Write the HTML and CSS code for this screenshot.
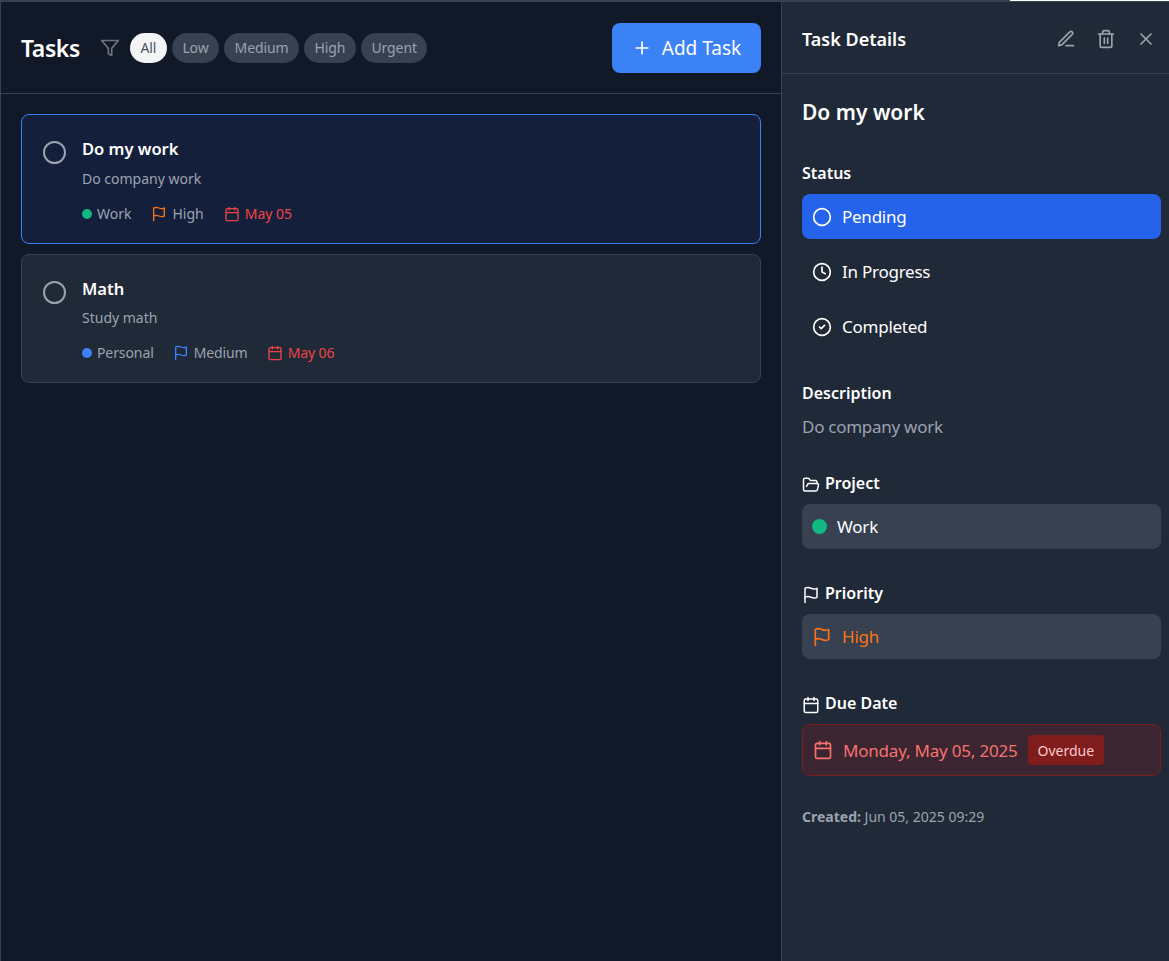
FILE: index.html
```html
<!DOCTYPE html>
<html>

<head>
    <meta charset="UTF-8">
    <title>Tasks</title>
    <link rel="stylesheet" href="styles.css">
</head>

<body>
    <div class="top-line"><span class="top-white"></span></div>
    <div class="app">
        <!-- Task list -->
        <main class="main">
            <header class="main-header">
                <div class="header-left">
                    <h1>Tasks</h1>
                    <svg class="filter-icon" width="20" height="20" viewBox="0 0 24 24"><polygon points="22 3 2 3 10 12.46 10 19 14 21 14 12.46 22 3"/></svg>
                    <div class="chips">
                        <span class="chip chip-active">All</span>
                        <span class="chip">Low</span>
                        <span class="chip">Medium</span>
                        <span class="chip">High</span>
                        <span class="chip">Urgent</span>
                    </div>
                </div>
                <button class="add-btn">
                    <svg width="20" height="20" viewBox="0 0 24 24"><path d="M5 12h14"/><path d="M12 5v14"/></svg>
                    Add Task
                </button>
            </header>

            <div class="task-list">
                <div class="task task-selected">
                    <span class="task-check"></span>
                    <div class="task-body">
                        <h3>Do my work</h3>
                        <p>Do company work</p>
                        <div class="task-meta">
                            <span class="meta"><i class="dot dot-green"></i>Work</span>
                            <span class="meta"><svg class="ic-orange" width="16" height="16" viewBox="0 0 24 24"><path d="M4 15s1-1 4-1 5 2 8 2 4-1 4-1V3s-1 1-4 1-5-2-8-2-4 1-4 1z"/><line x1="4" y1="22" x2="4" y2="15"/></svg>High</span>
                            <span class="meta meta-red"><svg width="16" height="16" viewBox="0 0 24 24"><rect x="3" y="4" width="18" height="18" rx="2"/><path d="M16 2v4M8 2v4M3 10h18"/></svg>May 05</span>
                        </div>
                    </div>
                </div>

                <div class="task">
                    <span class="task-check"></span>
                    <div class="task-body">
                        <h3>Math</h3>
                        <p>Study math</p>
                        <div class="task-meta">
                            <span class="meta"><i class="dot dot-blue"></i>Personal</span>
                            <span class="meta"><svg class="ic-blue" width="16" height="16" viewBox="0 0 24 24"><path d="M4 15s1-1 4-1 5 2 8 2 4-1 4-1V3s-1 1-4 1-5-2-8-2-4 1-4 1z"/><line x1="4" y1="22" x2="4" y2="15"/></svg>Medium</span>
                            <span class="meta meta-red"><svg width="16" height="16" viewBox="0 0 24 24"><rect x="3" y="4" width="18" height="18" rx="2"/><path d="M16 2v4M8 2v4M3 10h18"/></svg>May 06</span>
                        </div>
                    </div>
                </div>
            </div>
        </main>

        <!-- Task details -->
        <aside class="details">
            <header class="details-header">
                <h2>Task Details</h2>
                <div class="details-actions">
                    <svg width="20" height="20" viewBox="0 0 24 24"><path d="M12 20h9"/><path d="M16.5 3.5a2.12 2.12 0 0 1 3 3L7 19l-4 1 1-4z"/></svg>
                    <svg width="20" height="20" viewBox="0 0 24 24"><path d="M3 6h18"/><path d="M19 6v14a2 2 0 0 1-2 2H7a2 2 0 0 1-2-2V6"/><path d="M8 6V4a2 2 0 0 1 2-2h4a2 2 0 0 1 2 2v2"/><path d="M10 11v6M14 11v6"/></svg>
                    <svg width="20" height="20" viewBox="0 0 24 24"><path d="M18 6 6 18"/><path d="m6 6 12 12"/></svg>
                </div>
            </header>

            <div class="details-body">
                <h2 class="details-title">Do my work</h2>

                <section class="block block-status">
                    <h4>Status</h4>
                    <div class="status-list">
                        <div class="status status-active">
                            <svg width="20" height="20" viewBox="0 0 24 24"><circle cx="12" cy="12" r="10"/></svg>
                            Pending
                        </div>
                        <div class="status">
                            <svg width="20" height="20" viewBox="0 0 24 24"><circle cx="12" cy="12" r="10"/><polyline points="12 6 12 12 16 14"/></svg>
                            In Progress
                        </div>
                        <div class="status">
                            <svg width="20" height="20" viewBox="0 0 24 24"><circle cx="12" cy="12" r="10"/><path d="m9 12 2 2 4-4"/></svg>
                            Completed
                        </div>
                    </div>
                </section>

                <section class="block block-desc">
                    <h4>Description</h4>
                    <p class="desc">Do company work</p>
                </section>

                <section class="block">
                    <h4><svg width="18" height="18" viewBox="0 0 24 24"><path d="m6 14 1.5-2.9A2 2 0 0 1 9.24 10H20a2 2 0 0 1 1.94 2.5l-1.54 6a2 2 0 0 1-1.95 1.5H4a2 2 0 0 1-2-2V5a2 2 0 0 1 2-2h3.9a2 2 0 0 1 1.69.9l.81 1.2a2 2 0 0 0 1.67.9H18a2 2 0 0 1 2 2v2"/></svg>Project</h4>
                    <div class="field"><i class="dot dot-green dot-large"></i>Work</div>
                </section>

                <section class="block">
                    <h4><svg width="18" height="18" viewBox="0 0 24 24"><path d="M4 15s1-1 4-1 5 2 8 2 4-1 4-1V3s-1 1-4 1-5-2-8-2-4 1-4 1z"/><line x1="4" y1="22" x2="4" y2="15"/></svg>Priority</h4>
                    <div class="field field-high"><svg class="ic-orange" width="20" height="20" viewBox="0 0 24 24"><path d="M4 15s1-1 4-1 5 2 8 2 4-1 4-1V3s-1 1-4 1-5-2-8-2-4 1-4 1z"/><line x1="4" y1="22" x2="4" y2="15"/></svg>High</div>
                </section>

                <section class="block">
                    <h4><svg width="18" height="18" viewBox="0 0 24 24"><rect x="3" y="4" width="18" height="18" rx="2"/><path d="M16 2v4M8 2v4M3 10h18"/></svg>Due Date</h4>
                    <div class="field field-overdue">
                        <svg width="20" height="20" viewBox="0 0 24 24"><rect x="3" y="4" width="18" height="18" rx="2"/><path d="M16 2v4M8 2v4M3 10h18"/></svg>
                        Monday, May 05, 2025
                        <span class="overdue">Overdue</span>
                    </div>
                </section>

                <p class="created"><b>Created:</b> Jun 05, 2025 09:29</p>
            </div>
        </aside>
    </div>
</body>

</html>
```

FILE: styles.css
```css
* {
    box-sizing: border-box;
}

html,
body {
    margin: 0;
    padding: 0;
    height: 100%;
    overflow: hidden;
}

body {
    font-family: "Noto Sans", "Liberation Sans", sans-serif;
    background-color: #111827;
    color: #fff;
    display: flex;
    flex-direction: column;
}

svg {
    fill: none;
    stroke: currentColor;
    stroke-width: 2;
    stroke-linecap: round;
    stroke-linejoin: round;
    flex-shrink: 0;
}

h1,
h2,
h3,
h4,
p {
    margin: 0;
}

.top-line {
    height: 2px;
    background-color: #374151;
    display: flex;
    justify-content: flex-end;
    align-items: flex-start;
}

.top-white {
    width: 159px;
    height: 1px;
    background-color: #fff;
}

.app {
    flex: 1;
    display: flex;
    min-height: 0;
    border-left: 1px solid #374151;
}

/* Task list */
.main {
    width: 781px;
    border-right: 1px solid #374151;
}

.main-header {
    height: 92px;
    padding: 0 20px;
    display: flex;
    align-items: center;
    justify-content: space-between;
    border-bottom: 1px solid #374151;
}

.header-left {
    display: flex;
    align-items: center;
}

h1 {
    width: 59px;
    font-size: 23px;
    font-weight: 600;
    letter-spacing: -0.4px;
    white-space: nowrap;
    margin-right: 20px;
}

.filter-icon {
    color: #6b7280;
    margin-right: 10px;
}

.chips {
    display: flex;
    gap: 5px;
}

.chip {
    height: 30px;
    padding: 0 10.5px;
    display: flex;
    align-items: center;
    border-radius: 15px;
    font-size: 14px;
    letter-spacing: -0.1px;
    background-color: #374151;
    color: #9ca3af;
}

.chip-active {
    background-color: #f3f4f6;
    color: #4b5563;
}

.add-btn {
    width: 149px;
    height: 50px;
    border: none;
    border-radius: 8px;
    background-color: #3b82f6;
    color: #fff;
    font-family: inherit;
    font-size: 19px;
    display: flex;
    align-items: center;
    justify-content: center;
    gap: 10px;
}

.task-list {
    padding: 20px;
    display: flex;
    flex-direction: column;
    gap: 10px;
}

.task {
    height: 129px;
    padding: 21px;
    display: flex;
    gap: 16px;
    background-color: #1f2937;
    border: 1px solid #374151;
    border-radius: 8px;
}

.task-selected {
    height: 130px;
    background-color: #141f3b;
    border-color: #3b82f6;
}

.task-check {
    width: 23px;
    height: 23px;
    margin-top: 5px;
    border: 2px solid #9ca3af;
    border-radius: 50%;
    flex-shrink: 0;
}

.task-body h3 {
    font-size: 16.5px;
    font-weight: 600;
    line-height: 26px;
}

.task-body p {
    margin-top: 4px;
    font-size: 14px;
    line-height: 24px;
    color: #9ca3af;
}

.task-selected .task-body p {
    margin-top: 5px;
}

.task-meta {
    margin-top: 13px;
    display: flex;
    gap: 19px;
    font-size: 14px;
    letter-spacing: -0.1px;
    color: #9ca3af;
}

.task-selected .task-meta {
    gap: 20px;
    letter-spacing: 0;
}

.meta {
    display: flex;
    align-items: center;
    gap: 5px;
    line-height: 20px;
}

.meta-red {
    color: #ef4444;
}

.dot {
    width: 10px;
    height: 10px;
    border-radius: 50%;
    display: block;
}

.dot-green {
    background-color: #10b981;
}

.dot-blue {
    background-color: #3b82f6;
}

.dot-large {
    width: 15px;
    height: 15px;
}

.ic-orange {
    color: #f97316;
}

.ic-blue {
    color: #3b82f6;
}

/* Task details */
.details {
    flex: 1;
    background-color: #1f2937;
}

.details-header {
    height: 72px;
    padding: 2px 13px 0 20px;
    display: flex;
    align-items: center;
    justify-content: space-between;
    border-bottom: 1px solid #374151;
}

.details-header h2 {
    font-size: 18px;
    font-weight: 600;
}

.details-actions {
    display: flex;
    gap: 20px;
    color: #9ca3af;
}

.details-body {
    padding: 19px 8px 0 20px;
}

.details-title {
    font-size: 21px;
    font-weight: 600;
    line-height: 38px;
}

.block {
    margin-top: 34px;
}

.block h4 {
    height: 20px;
    font-size: 16px;
    font-weight: 600;
    line-height: 20px;
    margin-bottom: 11px;
    display: flex;
    align-items: center;
    gap: 5px;
}

.block h4 svg {
    margin-top: 3px;
}

.block-status {
    margin-top: 32px;
}

.status-list {
    display: flex;
    flex-direction: column;
    gap: 10px;
}

.status {
    height: 45px;
    padding: 0 10px;
    display: flex;
    align-items: center;
    gap: 10px;
    border-radius: 8px;
    font-size: 17px;
    letter-spacing: -0.25px;
}

.status-active {
    background-color: #2563eb;
}

.block-desc {
    margin-top: 34px;
}

.block-desc h4 {
    margin-bottom: 12px;
}

.desc {
    font-size: 17px;
    letter-spacing: -0.27px;
    color: #9ca3af;
    line-height: 24px;
}

.field {
    height: 45px;
    padding: 0 10px;
    display: flex;
    align-items: center;
    gap: 10px;
    border-radius: 8px;
    font-size: 17px;
    letter-spacing: -0.2px;
    background-color: #374151;
}

.field-high {
    color: #f97316;
}

.field-overdue {
    height: 52px;
    background-color: #3a2530;
    border: 1px solid #7f1d1d;
    color: #f87171;
}

.overdue {
    padding: 0 10px;
    height: 30px;
    display: flex;
    align-items: center;
    border-radius: 4px;
    background-color: #7f1d1d;
    color: #fecaca;
    font-size: 14px;
    letter-spacing: 0;
}

.created {
    margin-top: 31px;
    font-size: 14px;
    color: #9ca3af;
}
```
